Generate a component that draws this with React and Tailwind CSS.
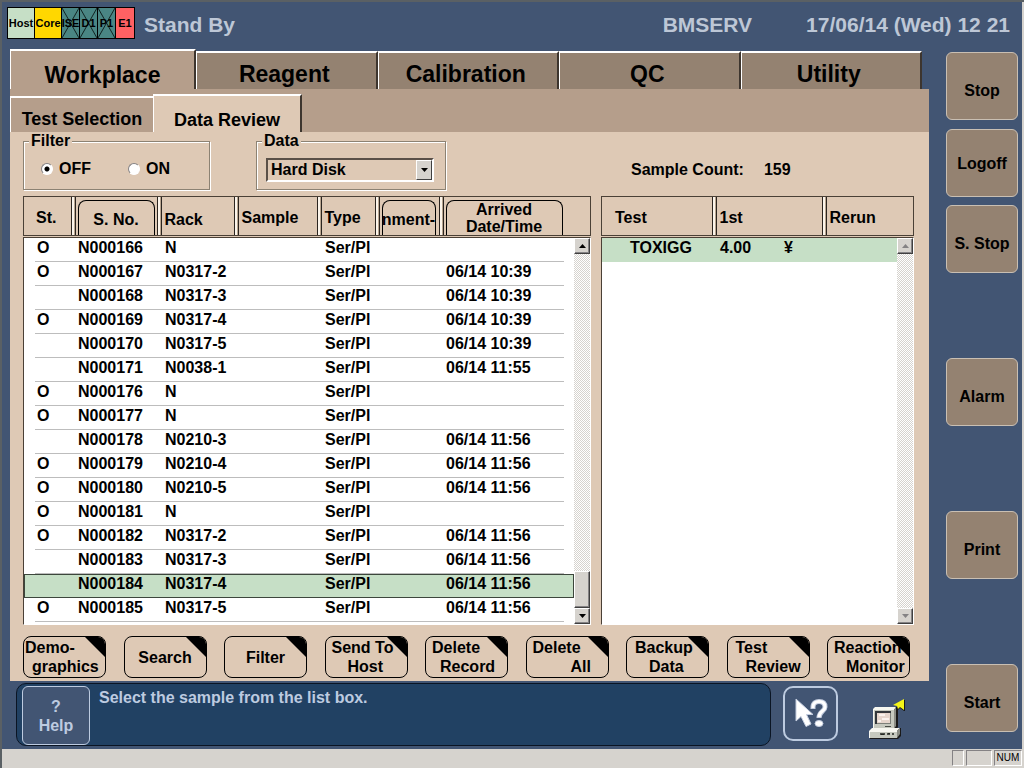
import { useState } from 'react';
import clsx from 'clsx';

const UNITS = [
  { name: 'Host', className: 'w-7 bg-[#c6dfc6]' },
  { name: 'Core', className: 'w-7 bg-[#ffd700]' },
  { name: 'ISE', className: 'w-[19px] bg-[#4a8684]', off: true },
  { name: 'D1', className: 'w-[19px] bg-[#4a8684]', off: true },
  { name: 'P1', className: 'w-[19px] bg-[#4a8684]', off: true },
  { name: 'E1', className: 'w-5 bg-[#ff6163]' },
];

const SECTIONS = ['Reagent', 'Calibration', 'QC', 'Utility'];

const SAMPLES = [
  ['O', 'N000166', 'N', ''],
  ['O', 'N000167', 'N0317-2', '06/14 10:39'],
  ['', 'N000168', 'N0317-3', '06/14 10:39'],
  ['O', 'N000169', 'N0317-4', '06/14 10:39'],
  ['', 'N000170', 'N0317-5', '06/14 10:39'],
  ['', 'N000171', 'N0038-1', '06/14 11:55'],
  ['O', 'N000176', 'N', ''],
  ['O', 'N000177', 'N', ''],
  ['', 'N000178', 'N0210-3', '06/14 11:56'],
  ['O', 'N000179', 'N0210-4', '06/14 11:56'],
  ['O', 'N000180', 'N0210-5', '06/14 11:56'],
  ['O', 'N000181', 'N', ''],
  ['O', 'N000182', 'N0317-2', '06/14 11:56'],
  ['', 'N000183', 'N0317-3', '06/14 11:56'],
  ['', 'N000184', 'N0317-4', '06/14 11:56'],
  ['O', 'N000185', 'N0317-5', '06/14 11:56'],
];

const ACTIONS = [
  { lines: ['Demo-', 'graphics'], first: 'pl-px', second: 'pl-2' },
  { lines: ['Search'] },
  { lines: ['Filter'] },
  { lines: ['Send To', 'Host'], first: 'pl-1.5', second: 'pl-[22px]' },
  { lines: ['Delete', 'Record'], first: 'pl-1.5', second: 'pl-3.5' },
  { lines: ['Delete', 'All'], first: 'pl-1.5', second: 'pl-11' },
  { lines: ['Backup', 'Data'], first: 'pl-2', second: 'pl-[22px]' },
  { lines: ['Test', 'Review'], first: 'pl-2', second: 'pl-[18px]' },
  { lines: ['Reaction', 'Monitor'], first: 'pl-1.5', second: 'pl-[18px]' },
];

const COMMANDS = [
  { name: 'Stop', className: 'pt-2.5' },
  { name: 'Logoff', className: 'mt-[9px] pt-0.5' },
  { name: 'S. Stop', className: 'mt-2 pt-2.5' },
  { name: 'Alarm', className: 'mt-[85px] pt-2.5' },
  { name: 'Print', className: 'mt-[85px] pt-2.5' },
  { name: 'Start', className: 'mt-[85px] pt-2.5' },
];

const DIVIDER =
  'shadow-[inset_-1px_0_#2b2520,inset_-2px_0_#b8a590,inset_-4px_0_#fbf4ea,inset_-5px_0_#2b2520]';

function Unit({ name, className, off }) {
  return (
    <div
      className={clsx(
        'relative -ml-px flex h-8 items-center justify-center border border-black text-[11px] leading-none text-black',
        className
      )}
    >
      {off && (
        <svg className="absolute inset-0 h-full w-full" viewBox="0 0 18 30" preserveAspectRatio="none">
          <path d="M0 0 L18 30 M18 0 L0 30" stroke="#10201f" strokeWidth="1" />
        </svg>
      )}
      <span className="relative">{name}</span>
    </div>
  );
}

function ScrollButton({ down, disabled }) {
  return (
    <button
      type="button"
      disabled={disabled}
      aria-label={down ? 'Scroll down' : 'Scroll up'}
      className="flex h-4 w-4 shrink-0 items-center justify-center border border-t-white border-l-white border-r-[#404040] border-b-[#404040] bg-[#d6d3ce] shadow-[inset_-1px_-1px_#848284]"
    >
      <svg width="7" height="4" viewBox="0 0 7 4" className={disabled ? 'fill-[#848284]' : 'fill-black'}>
        <path d={down ? 'M0 0H7L3.5 4Z' : 'M0 4H7L3.5 0Z'} />
      </svg>
    </button>
  );
}

function ScrollBar({ disabled }) {
  return (
    <div className="flex w-4 shrink-0 flex-col bg-[conic-gradient(#ffffff_25%,#d6d3ce_0_50%,#ffffff_0_75%,#d6d3ce_0)] bg-[length:2px_2px]">
      <ScrollButton disabled={disabled} />
      <div className="flex-1" />
      {!disabled && (
        <div className="h-[37px] border border-t-white border-l-white border-r-[#404040] border-b-[#404040] bg-[#d6d3ce] shadow-[inset_-1px_-1px_#848284]" />
      )}
      <ScrollButton down disabled={disabled} />
    </div>
  );
}

function HeaderButton({ children, className }) {
  return (
    <button
      type="button"
      className={clsx(
        'mt-[3px] flex h-[35px] justify-center rounded-t-lg border border-b-0 border-black',
        className
      )}
    >
      {children}
    </button>
  );
}

function SampleTable() {
  const [selected, setSelected] = useState('N000184');

  return (
    <div>
      <table className="h-10 w-full table-fixed border-collapse border border-[#4a4036]">
        <colgroup>
          <col className="w-[52px]" />
          <col className="w-[86px]" />
          <col className="w-[77px]" />
          <col className="w-[83px]" />
          <col className="w-[58px]" />
          <col className="w-[64px]" />
          <col />
        </colgroup>
        <thead>
          <tr className="h-[38px] text-left">
            <th className={clsx('pt-1 pl-3', DIVIDER)}>St.</th>
            <th className={clsx('pl-0.5 align-top', DIVIDER)}>
              <HeaderButton className="w-[77px] items-center pt-1">S. No.</HeaderButton>
            </th>
            <th className={clsx('pt-2 pl-[3px]', DIVIDER)}>Rack</th>
            <th className={clsx('pt-1 pl-[3px]', DIVIDER)}>Sample</th>
            <th className={clsx('pt-1 pl-[3px]', DIVIDER)}>Type</th>
            <th className={clsx('pl-0.5 align-top', DIVIDER)}>
              <HeaderButton className="w-[54px] items-center pt-1">nment-</HeaderButton>
            </th>
            <th className="pl-0.5 align-top">
              <HeaderButton className="w-[117px] leading-[17px]">
                <span>
                  Arrived
                  <br />
                  Date/Time
                </span>
              </HeaderButton>
            </th>
          </tr>
        </thead>
      </table>

      <div className="mt-px flex border border-t-[#4a4036] border-l-[#4a4036] border-r-white border-b-white bg-white">
        <div className="flex-1 pb-0.5">
          <table className="w-full table-fixed border-separate border-spacing-0">
            <colgroup>
              <col className="w-[11px]" />
              <col className="w-[41px]" />
              <col className="w-[87px]" />
              <col className="w-[77px]" />
              <col className="w-[83px]" />
              <col className="w-[58px]" />
              <col className="w-[63px]" />
              <col />
              <col className="w-[10px]" />
            </colgroup>
            <tbody>
              {SAMPLES.map(([status, number, rack, arrived]) => (
                <tr
                  key={number}
                  onClick={() => setSelected(number)}
                  className={clsx(
                    'h-6 leading-[18px] [&>td]:pb-1 [&>td]:pl-0.5',
                    number === selected
                      ? 'bg-[#c6dfc6] [&>td]:border-y [&>td]:border-[#3c463c] [&>td:first-child]:border-l [&>td:last-child]:border-r'
                      : '[&>td:not(:first-child):not(:last-child)]:border-b [&>td]:border-[#bdbdbd]'
                  )}
                >
                  <td />
                  <td>{status}</td>
                  <td>{number}</td>
                  <td>{rack}</td>
                  <td />
                  <td>Ser/Pl</td>
                  <td />
                  <td>{arrived}</td>
                  <td />
                </tr>
              ))}
            </tbody>
          </table>
        </div>
        <ScrollBar />
      </div>
    </div>
  );
}

function ResultTable() {
  return (
    <div className="flex flex-col">
      <table className="h-10 w-full table-fixed border-collapse border border-[#4a4036]">
        <colgroup>
          <col className="w-[115px]" />
          <col className="w-[110px]" />
          <col />
        </colgroup>
        <thead>
          <tr className="h-[38px] text-left">
            <th className={clsx('pt-1 pl-[13px]', DIVIDER)}>Test</th>
            <th className={clsx('pt-1 pl-[3px]', DIVIDER)}>1st</th>
            <th className="pt-1 pl-[3px]">Rerun</th>
          </tr>
        </thead>
      </table>

      <div className="mt-px flex flex-1 border border-t-[#4a4036] border-l-[#4a4036] border-r-white border-b-white bg-white">
        <div className="flex-1">
          <table className="w-full table-fixed border-separate border-spacing-0">
            <colgroup>
              <col className="w-[116px]" />
              <col className="w-[64px]" />
              <col />
            </colgroup>
            <tbody>
              <tr className="h-6 bg-[#c6dfc6] leading-[18px] [&>td]:pb-1">
                <td className="pl-7">TOXIGG</td>
                <td className="pl-0.5">4.00</td>
                <td className="pl-0.5">¥</td>
              </tr>
            </tbody>
          </table>
        </div>
        <ScrollBar disabled />
      </div>
    </div>
  );
}

function FilterOption({ value, checked, onChange }) {
  return (
    <label className="flex w-[87px] shrink-0 items-center gap-1.5">
      <input
        type="radio"
        name="filter"
        value={value}
        checked={checked}
        onChange={onChange}
        className="h-3 w-3 appearance-none rounded-full border border-t-[#848284] border-l-[#848284] border-r-white border-b-white bg-white checked:bg-[radial-gradient(circle,#000_2px,#fff_3px)]"
      />
      {value}
    </label>
  );
}

function ActionButton({ lines, first, second }) {
  return (
    <button
      type="button"
      className="relative h-[42px] w-[83px] overflow-hidden rounded-lg border border-black leading-[19px]"
    >
      <svg className="absolute top-0 right-0" width="20" height="20" viewBox="0 0 20 20">
        <path d="M0 0H20V20Z" />
      </svg>
      {lines.length === 1 ? (
        lines[0]
      ) : (
        <>
          <span className={clsx('block text-left whitespace-nowrap', first)}>{lines[0]}</span>
          <span className={clsx('block text-left whitespace-nowrap', second)}>{lines[1]}</span>
        </>
      )}
    </button>
  );
}

function PointerHelpIcon() {
  return (
    <svg width="34" height="32" viewBox="0 0 34 32">
      <path
        d="M2 1V23L7 18.500L12 28.500L17 26L12.500 16.500H19Z"
        fill="#fff"
        stroke="#c5cee0"
        strokeWidth="1"
      />
      <path
        d="M19 11V9C19 5 22 3.500 25 3.500C29 3.500 31 5.500 31 9C31 13.500 25 13 25 20"
        fill="none"
        stroke="#c5cee0"
        strokeWidth="5"
      />
      <path
        d="M19 10V9C19 5 22 3.500 25 3.500C29 3.500 31 5.500 31 9C31 13.500 25 13 25 19"
        fill="none"
        stroke="#fff"
        strokeWidth="3"
      />
      <ellipse cx="25" cy="25.500" rx="4" ry="3" fill="#fff" stroke="#c5cee0" />
    </svg>
  );
}

function ComputerIcon() {
  return (
    <svg width="38" height="42" viewBox="0 0 38 42">
      <path d="M6 11L9 8H28L29 10V28L27 31H6Z" fill="#1a1a1a" />
      <path d="M4 10L6 8H27L25 11H4Z" fill="#f7f7f0" />
      <path d="M25 11L27 8V27L25 30Z" fill="#8a8c84" />
      <path d="M4 10H25V29H4Z" fill="#c6c9be" />
      <path d="M4 10H25V11H5V29H4Z" fill="#f7f7f0" />
      <path d="M6 12H22V25H6Z" fill="#7d8079" />
      <path d="M6 12H22V14H8V25H6Z" fill="#33373a" />
      <path d="M8 14H21V24H8Z" fill="#e6d6cc" />
      <path d="M10 15H16V17H10ZM13 19H20V21H13ZM9 21H12V23H9Z" fill="#faf2ec" />
      <path d="M16 27H22V28H16Z" fill="#4b4e48" />
      <path d="M1 33L4 29H32V37L29 40H1Z" fill="#1a1a1a" />
      <path d="M0 32L3 29H31L28 32Z" fill="#f7f7f0" />
      <path d="M28 32L31 29V35L28 39Z" fill="#8a8c84" />
      <path d="M0 32H28V39H0Z" fill="#c6c9be" />
      <path d="M0 32H28V33H1V39H0Z" fill="#f7f7f0" />
      <path d="M11 34H16V36H11ZM18 34H21V36H18ZM23 34H25V36H23Z" fill="#4b4e48" />
      <path d="M12 35H15V36H12ZM19 34H21V35H19Z" fill="#23261f" />
      <path d="M35 1H36V12H35L31 9L29 11L28 8Z" fill="#1a1a1a" />
      <path d="M24 6L35 0V11L31 8L29 10L28 7Z" fill="#f4f418" />
    </svg>
  );
}

export default function App() {
  const [filter, setFilter] = useState('OFF');
  const [source, setSource] = useState('Hard Disk');

  return (
    <div className="flex min-h-screen flex-col border-t-2 border-l-2 border-[#5a6064] bg-[#425573] font-['Liberation_Sans',Arial,sans-serif] text-base leading-[18px] font-bold text-black">
      <div className="flex-1 border-r-2 border-[#d6d3ce]">
        <header className="flex h-[47px] items-center pr-3 pb-1 pl-1.5 text-[21px] leading-6 text-[#bdc7d6]">
          <div className="flex pb-px">
            {UNITS.map(unit => (
              <Unit key={unit.name} {...unit} />
            ))}
          </div>
          <h1 className="ml-[9px] flex-1 pt-0.5">Stand By</h1>
          <span className="pt-0.5">BMSERV</span>
          <time className="ml-[54px] pt-0.5">17/06/14 (Wed) 12 21</time>
        </header>

        <div className="flex">
          <div className="min-w-0 flex-1 pl-2">
            <nav className="flex items-end pr-[7px] text-[23px] leading-7">
              <button
                type="button"
                className="h-10 w-[186px] border-t-2 border-r-2 border-l border-t-white border-r-[#3d352e] border-l-white bg-[#b59e8b] pt-2.5"
              >
                Workplace
              </button>
              {SECTIONS.map(name => (
                <button
                  key={name}
                  type="button"
                  className="h-[38px] flex-1 border-t-2 border-r-2 border-l border-t-white border-r-[#3d352e] border-l-white bg-[#948271] pr-1 pt-1.5"
                >
                  {name}
                </button>
              ))}
            </nav>

            <div className="flex h-[43px] items-end bg-[#b59e8b] text-lg leading-5">
              <button type="button" className="h-9 w-[143px] border-t-2 border-l border-white pt-2">
                Test Selection
              </button>
              <button
                type="button"
                className="h-[38px] w-[149px] border-t-2 border-r-2 border-l border-t-white border-r-[#3d352e] border-l-white bg-[#dec9b5] pt-3"
              >
                Data Review
              </button>
            </div>

            <main className="bg-[#dec9b5] pr-[15px] pb-[3px] pl-[13px]">
              <div className="grid grid-cols-[568fr_313fr] gap-x-2.5 gap-y-1.5">
                <div className="flex gap-[46px]">
                  <fieldset className="h-[58px] w-[187px] min-w-0 border border-[#8c8273] px-[5px] shadow-[inset_1px_1px_#fff,1px_1px_#fff]">
                    <legend className="bg-[#dec9b5] px-0.5">Filter</legend>
                    <div className="flex pt-2.5 pl-3">
                      {['OFF', 'ON'].map(value => (
                        <FilterOption
                          key={value}
                          value={value}
                          checked={filter === value}
                          onChange={() => setFilter(value)}
                        />
                      ))}
                    </div>
                  </fieldset>

                  <fieldset className="h-[58px] w-[190px] min-w-0 border border-[#8c8273] px-[5px] shadow-[inset_1px_1px_#fff,1px_1px_#fff]">
                    <legend className="bg-[#dec9b5] px-0.5">Data</legend>
                    <div className="relative mt-2 ml-1 w-[168px]">
                      <select
                        aria-label="Data"
                        value={source}
                        onChange={e => setSource(e.target.value)}
                        className="h-6 w-full appearance-none border-2 border-t-[#5a5048] border-l-[#5a5048] border-r-white border-b-white bg-[#dec9b5] pl-[3px] leading-[18px]"
                      >
                        <option>Hard Disk</option>
                      </select>
                      <span className="pointer-events-none absolute top-0.5 right-0.5 flex h-5 w-4 items-center justify-center border border-t-white border-l-white border-r-[#404040] border-b-[#404040] bg-[#d6d3ce]">
                        <svg width="7" height="4" viewBox="0 0 7 4">
                          <path d="M0 0H7L3.5 4Z" />
                        </svg>
                      </span>
                    </div>
                  </fieldset>
                </div>

                <dl className="flex items-center gap-5 pt-[18px] pl-[30px]">
                  <dt>Sample Count:</dt>
                  <dd>159</dd>
                </dl>

                <SampleTable />
                <ResultTable />
              </div>

              <div className="mt-[11px] flex justify-between pr-1">
                {ACTIONS.map(action => (
                  <ActionButton key={action.lines.join(' ')} {...action} />
                ))}
              </div>
            </main>

            <footer className="flex h-[68px] items-start pt-0.5 pl-1.5">
              <div className="flex h-[63px] flex-1 gap-[9px] rounded-[10px] border border-[#0b1524] bg-[#214163] pt-0.5 pl-[5px] text-[#bdcbe0]">
                <button
                  type="button"
                  className="w-[68px] rounded-md border border-[#bdcbe0] bg-[#425573] leading-[19px]"
                >
                  ?
                  <br />
                  Help
                </button>
                <p className="pt-[3px]">Select the sample from the list box.</p>
              </div>
              <button
                type="button"
                aria-label="Context help"
                className="mt-[3px] ml-3 flex h-[55px] w-[55px] items-center justify-center rounded-[10px] border-2 border-[#bdcbe0]"
              >
                <PointerHelpIcon />
              </button>
              <div className="w-[91px] pt-4 pl-[31px]">
                <ComputerIcon />
              </div>
            </footer>
          </div>

          <aside className="mr-1 ml-[17px] flex w-[72px] flex-col pt-[3px]">
            {COMMANDS.map(({ name, className }) => (
              <button
                key={name}
                type="button"
                className={clsx('h-[68px] rounded-md border border-[#c9bfb3] bg-[#948271]', className)}
              >
                {name}
              </button>
            ))}
          </aside>
        </div>
      </div>

      <div className="flex h-[19px] items-start justify-end gap-0.5 bg-[#d6d3ce] pt-px pr-0.5 text-[10px] leading-4 font-normal">
        <span className="h-4 w-3 border border-t-[#848284] border-l-[#848284] border-r-white border-b-white" />
        <span className="h-4 w-[26px] border border-t-[#848284] border-l-[#848284] border-r-white border-b-white" />
        <span className="h-4 w-7 border border-t-[#848284] border-l-[#848284] border-r-white border-b-white text-center leading-[14px]">
          NUM
        </span>
      </div>
    </div>
  );
}
